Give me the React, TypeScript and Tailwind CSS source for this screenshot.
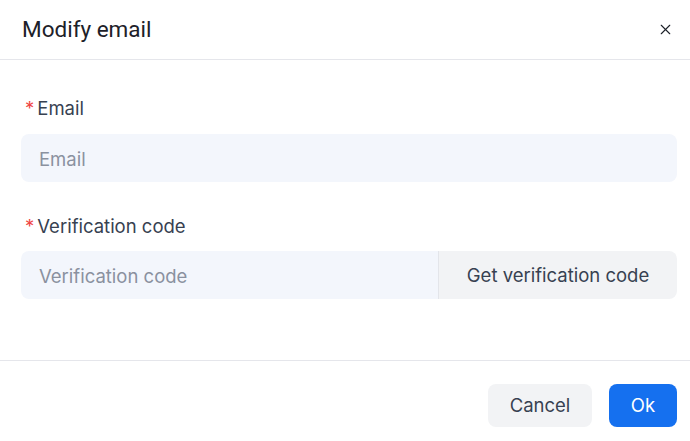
import { X } from "lucide-react";

const Label = ({ text }: { text: string }) => (
  <div className="flex items-center pl-[4px] text-[18.5px] leading-6 text-[#374151]">
    <span className="mr-[3px] text-[#ef4444]">*</span>
    {text}
  </div>
);

export default function App() {
  return (
    <div
      className="flex h-[441px] w-[690px] flex-col bg-white"
      style={{ fontFamily: "Inter, 'Noto Sans', sans-serif" }}
    >
      <div className="flex h-[60px] shrink-0 items-center justify-between border-b border-[#e5e6eb] pl-[22px] pr-[16px]">
        <h2 className="text-[22.5px] text-[#1d2129]" style={{ fontFamily: "Roboto, sans-serif" }}>
          Modify email
        </h2>
        <button className="text-[#1d2129]">
          <X className="h-[17px] w-[17px]" strokeWidth={1.6} />
        </button>
      </div>

      <div className="flex h-[301px] shrink-0 flex-col border-b border-[#e5e6eb] pl-[21px] pr-[13px]">
        <div className="mt-[36px]">
          <Label text="Email" />
        </div>
        <input
          placeholder="Email"
          className="mt-[14px] h-[48px] w-full rounded-[8px] bg-[#f3f6fc] px-[18px] pt-[2px] text-[18.5px] text-[#374151] outline-none placeholder:text-[#8a919f]"
        />
        <div className="mt-[32px]">
          <Label text="Verification code" />
        </div>
        <div className="mt-[13px] flex h-[48px] w-full overflow-hidden rounded-[8px]">
          <input
            placeholder="Verification code"
            className="h-full min-w-0 flex-1 bg-[#f3f6fc] px-[18px] pt-[2px] text-[18.5px] text-[#374151] outline-none placeholder:text-[#8a919f]"
          />
          <button className="h-full w-[239px] border-l border-[#e3e5ea] bg-[#f2f3f5] pt-[2px] text-[18.5px] text-[#374151]">
            Get verification code
          </button>
        </div>
      </div>

      <div className="flex flex-1 items-start justify-end gap-[17px] pr-[13px] pt-[23px]">
        <button className="h-[43px] w-[104px] rounded-[8px] bg-[#f2f3f5] text-[18.5px] text-[#374151]">
          Cancel
        </button>
        <button className="h-[43px] w-[68px] rounded-[8px] bg-[#1570ef] text-[18.5px] text-white">
          Ok
        </button>
      </div>
    </div>
  );
}
